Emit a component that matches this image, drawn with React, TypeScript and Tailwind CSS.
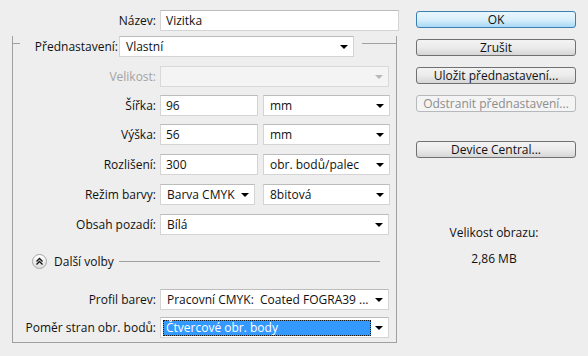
const Arrow = ({ disabled }: { disabled?: boolean }) => (
  <span
    className={
      disabled
        ? "w-0 h-0 border-x-[4px] border-x-transparent border-t-[4px] border-t-[#b8b8b8]"
        : "w-0 h-0 border-x-[4px] border-x-transparent border-t-[4px] border-t-black"
    }
  />
);

const Input = ({ value, w }: { value: string; w: string }) => (
  <div className={`${w} h-[21px] bg-white border border-[#d4d4d4] border-t-[#bcbcbc] flex items-center px-[5px]`}>
    {value}
  </div>
);

const Select = ({ value, w, disabled }: { value: string; w: string; disabled?: boolean }) => (
  <div
    className={`${w} h-[21px] border flex items-center justify-between pl-[6px] pr-[5px] ${
      disabled ? "bg-[#f4f4f4] border-[#d9d9d9]" : "bg-white border-[#d4d4d4] border-t-[#bcbcbc]"
    }`}
  >
    <span className="whitespace-pre">{value}</span>
    <Arrow disabled={disabled} />
  </div>
);

const Label = ({ children, w, dim }: { children: string; w: string; dim?: boolean }) => (
  <span className={`${w} text-right shrink-0 ${dim ? "text-[#a3a3a3]" : ""}`}>{children}</span>
);

const Button = ({ children, primary, disabled, className = "" }: { children: string; primary?: boolean; disabled?: boolean; className?: string }) => {
  let look = "border-[#707070] bg-gradient-to-b from-[#f3f3f3] via-[#ebebeb] to-[#d6d6d6]";
  if (primary) look = "border-[#3c7fb1] bg-gradient-to-b from-[#eaf6fd] via-[#d9f0fc] to-[#a7d9f5]";
  if (disabled) look = "border-[#b5b9bc] bg-[#f4f4f4] text-[#8d8d8d]";
  return (
    <div className={`w-[160px] h-[17px] rounded-[3px] border flex items-center justify-center leading-none ${look} ${className}`}>
      {children}
    </div>
  );
};

export default function App() {
  return (
    <div className="w-[588px] h-[356px] bg-[#eeeeee] flex text-[12px] text-[#111] font-['Open_Sans',sans-serif] overflow-hidden">
      {/* levy sloupec */}
      <div className="w-[400px] pt-[10px]">
        <div className="flex items-center">
          <Label w="w-[156px]">Název:</Label>
          <div className="ml-[4px]">
            <Input value="Vizitka" w="w-[239px]" />
          </div>
        </div>

        <div className="ml-[12px] mt-[12px] w-[385px] border-x border-b border-[#a0a0a0] pb-[4px]">
          <div className="flex -mt-[7px] -mx-px items-start">
            <div className="w-[8px] h-px bg-[#a0a0a0] mt-[7px]" />
            <div className="ml-[14px] w-[84px] h-[21px] flex items-center justify-end whitespace-nowrap">Přednastavení:</div>
            <div className="ml-[1px]">
              <Select value="Vlastní" w="w-[235px]" />
            </div>
            <div className="ml-[8px] flex-1 h-px bg-[#a0a0a0] mt-[7px]" />
          </div>

          <div className="flex items-center mt-[9px]">
            <Label w="w-[143px]" dim>Velikost:</Label>
            <div className="ml-[4px]">
              <Select value="" w="w-[229px]" disabled />
            </div>
          </div>

          <div className="flex items-center mt-[8px]">
            <Label w="w-[143px]">Šířka:</Label>
            <div className="ml-[4px]">
              <Input value="96" w="w-[98px]" />
            </div>
            <div className="ml-[5px]">
              <Select value="mm" w="w-[127px]" />
            </div>
          </div>

          <div className="flex items-center mt-[8px]">
            <Label w="w-[143px]">Výška:</Label>
            <div className="ml-[4px]">
              <Input value="56" w="w-[98px]" />
            </div>
            <div className="ml-[5px]">
              <Select value="mm" w="w-[127px]" />
            </div>
          </div>

          <div className="flex items-center mt-[9px]">
            <Label w="w-[143px]">Rozlišení:</Label>
            <div className="ml-[4px]">
              <Input value="300" w="w-[98px]" />
            </div>
            <div className="ml-[5px]">
              <Select value="obr. bodů/palec" w="w-[127px]" />
            </div>
          </div>

          <div className="flex items-center mt-[9px]">
            <Label w="w-[143px]">Režim barvy:</Label>
            <div className="ml-[4px]">
              <Select value="Barva CMYK" w="w-[95px]" />
            </div>
            <div className="ml-[8px]">
              <Select value="8bitová" w="w-[127px]" />
            </div>
          </div>

          <div className="flex items-center mt-[9px]">
            <Label w="w-[143px]">Obsah pozadí:</Label>
            <div className="ml-[4px]">
              <Select value="Bílá" w="w-[229px]" />
            </div>
          </div>

          <div className="flex items-center mt-[19px] h-[15px] pl-[19px] pr-[16px]">
            <div className="w-[15px] h-[15px] rounded-full border border-[#a5a5a5] bg-gradient-to-b from-white to-[#dedede] flex items-center justify-center">
              <svg width="9" height="9" viewBox="0 0 9 9">
                <path d="M1.5 4.5 L4.5 1.5 L7.5 4.5 M1.5 7.5 L4.5 4.5 L7.5 7.5" fill="none" stroke="#111" strokeWidth="1.3" />
              </svg>
            </div>
            <span className="ml-[7px]">Další volby</span>
            <div className="ml-[5px] flex-1 h-px bg-[#a0a0a0]" />
          </div>

          <div className="flex items-center mt-[20px]">
            <Label w="w-[143px]">Profil barev:</Label>
            <div className="ml-[4px]">
              <Select value="Pracovní CMYK:  Coated FOGRA39 ..." w="w-[229px]" />
            </div>
          </div>

          <div className="flex items-center mt-[7px]">
            <Label w="w-[143px]">Poměr stran obr. bodů:</Label>
            <div className="ml-[4px] w-[229px] h-[21px] bg-white border border-[#d4d4d4] border-t-[#bcbcbc] flex items-center pl-[2px] pr-[5px]">
              <div className="w-[208px] h-[16px] bg-[#3399ff] border border-dotted border-[#1a1a1a] text-white flex items-center pl-[2px]">
                Čtvercové obr. body
              </div>
              <div className="flex-1 flex justify-end">
                <Arrow />
              </div>
            </div>
          </div>
        </div>
      </div>

      {/* pravy sloupec */}
      <div className="flex-1 pt-[11px] flex flex-col">
        <div className="pl-[16px] flex flex-col">
          <Button primary>OK</Button>
          <Button className="mt-[11px]">Zrušit</Button>
          <Button className="mt-[11px]">Uložit přednastavení...</Button>
          <Button className="mt-[11px]" disabled>Odstranit přednastavení...</Button>
          <Button className="mt-[29px]">Device Central...</Button>
        </div>
        <div className="mt-[67px] text-center leading-[16px]">Velikost obrazu:</div>
        <div className="mt-[10px] text-center leading-[16px]">2,86 MB</div>
      </div>
    </div>
  );
}
